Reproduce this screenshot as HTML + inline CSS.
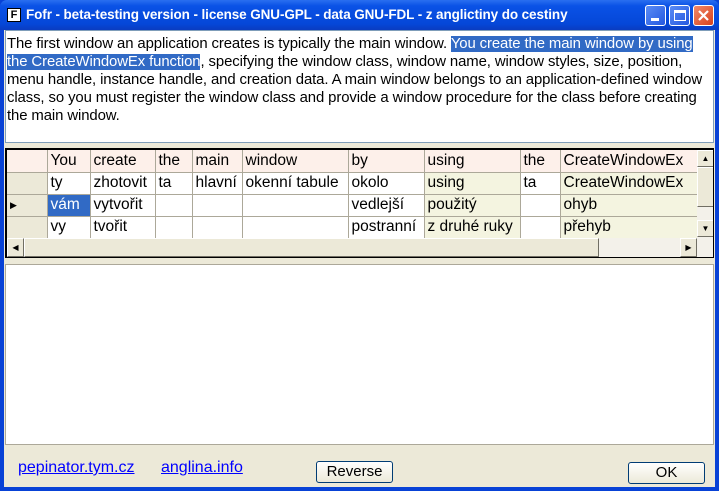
<!DOCTYPE html>
<html><head><meta charset="utf-8"><style>
*{margin:0;padding:0;box-sizing:border-box}
body{width:719px;height:491px;overflow:hidden;font-family:"Liberation Sans",sans-serif;position:relative;background:#0842d6}
.title{position:absolute;left:0;top:0;width:719px;height:30px;background:linear-gradient(#2a6ff0,#0a52e6 20%,#0547d8 80%,#0a3cc0);border-radius:7px 7px 0 0}
.title .t{position:absolute;left:26px;top:7px;color:#fff;font-weight:bold;font-size:13.5px;letter-spacing:-0.1px}
.ico{position:absolute;left:7px;top:8px;width:14px;height:14px;background:#fff;border:1px solid #000;font:bold 11px "Liberation Sans";text-align:center;line-height:12px}
.btn{position:absolute;top:5px;width:21px;height:21px;border:1px solid #fff;border-radius:3px;background:linear-gradient(135deg,#5a8cf5,#2458e0)}
.client{position:absolute;left:4px;top:30px;width:711px;height:457px;background:#ece9d8}
.txt{position:absolute;left:1px;top:0;width:709px;height:113px;background:#fff;border:1px solid #7f9db9;font-size:14.9px;line-height:18px;padding:4px 8px 3px 1px;color:#000;letter-spacing:-0.1px}
.sel{background:#316ac5;color:#fff}
.grid{position:absolute;left:1px;top:118px;width:709px;height:110px;border:1px solid #000;border-width:2px 1px 1px 2px;background:#fff;overflow:hidden}
table{border-collapse:collapse;font-size:15.5px;position:absolute;left:0;top:0;table-layout:fixed;width:690px}
td{height:22px;border:1px solid #aca899;padding:0 3px;white-space:nowrap;overflow:hidden;border-top:none;border-left:none}
tr.h td{background:#fdf0ea}
td.rh{background:#ece9d8}
.b{background:#f4f4e0}
.hs{position:absolute;left:0;top:88px;width:690px;height:19px;background:#ece9d8}
.vs{position:absolute;left:690px;top:0;width:17px;height:107px;background:#f3f1ea}
.sb{position:absolute;background:#ece9d8;border:1px solid;border-color:#fff #716f64 #716f64 #fff}
.bottom{position:absolute;left:1px;top:234px;width:709px;height:181px;background:#fff;border:1px solid #aca899}
a{position:absolute;color:#0000ff;text-decoration:underline;font-size:16px;top:429px}
.pb{position:absolute;height:22px;border:1px solid #003c74;border-radius:3px;background:linear-gradient(#fff,#ece9d8);font-size:15px;text-align:center;line-height:20px}
</style></head><body>
<div class="title"><div class="ico">F</div><div class="t">Fofr - beta-testing version - license GNU-GPL - data GNU-FDL - z anglictiny do cestiny</div>
<div class="btn" style="left:645px"><div style="position:absolute;left:5px;top:12px;width:8px;height:3px;background:#fff"></div></div>
<div class="btn" style="left:669px"><div style="position:absolute;left:4px;top:4px;width:12px;height:11px;border:1px solid #fff;border-top-width:3px"></div></div>
<div class="btn" style="left:693px;background:linear-gradient(135deg,#f08a6a,#d8401c)"><svg width="19" height="19" style="position:absolute;left:0;top:0"><path d="M5 5L14 14M14 5L5 14" stroke="#fff" stroke-width="2.2"/></svg></div>
</div>
<div class="client">
<div class="txt">The first window an application creates is typically the main window. <span class="sel">You create the main window by using the CreateWindowEx function</span>, specifying the window class, window name, window styles, size, position, menu handle, instance handle, and creation data. A main window belongs to an application-defined window class, so you must register the window class and provide a window procedure for the class before creating the main window.</div>
<div class="grid">
<table>
<colgroup><col style="width:40px"><col style="width:43px"><col style="width:65px"><col style="width:37px"><col style="width:50px"><col style="width:106px"><col style="width:76px"><col style="width:96px"><col style="width:40px"><col style="width:137px"></colgroup>
<tr class="h"><td class="rh" style="background:#fdf0ea"></td><td>You</td><td>create</td><td>the</td><td>main</td><td>window</td><td>by</td><td>using</td><td>the</td><td>CreateWindowEx</td></tr>
<tr><td class="rh"></td><td>ty</td><td>zhotovit</td><td>ta</td><td>hlavní</td><td>okenní tabule</td><td>okolo</td><td class="b">using</td><td>ta</td><td class="b">CreateWindowEx</td></tr>
<tr><td class="rh" style="font-size:9px">▶</td><td class="sel">vám</td><td>vytvořit</td><td></td><td></td><td></td><td>vedlejší</td><td class="b">použitý</td><td></td><td class="b">ohyb</td></tr>
<tr><td class="rh"></td><td>vy</td><td>tvořit</td><td></td><td></td><td></td><td>postranní</td><td class="b">z druhé ruky</td><td></td><td class="b">přehyb</td></tr>
</table>
<div class="vs"><div class="sb" style="left:0;top:0;width:17px;height:17px;font-size:8px;text-align:center;line-height:15px">▲</div><div class="sb" style="left:0;top:17px;width:17px;height:40px"></div><div class="sb" style="left:0;top:70px;width:17px;height:17px;font-size:8px;text-align:center;line-height:15px">▼</div></div>
<div class="hs"><div class="sb" style="left:0;top:0;width:17px;height:19px;font-size:8px;text-align:center;line-height:17px">◀</div><div class="sb" style="left:17px;top:0;width:575px;height:19px"></div><div style="position:absolute;left:592px;top:0;width:81px;height:19px;background:#f3f1ea"></div><div class="sb" style="left:673px;top:0;width:17px;height:19px;font-size:8px;text-align:center;line-height:17px">▶</div></div>
</div>
<div class="bottom"></div>
<a style="left:14px">pepinator.tym.cz</a>
<a style="left:157px">anglina.info</a>
<div class="pb" style="left:312px;top:431px;width:77px">Reverse</div>
<div class="pb" style="left:624px;top:432px;width:77px">OK</div>
</div>
</body></html>
